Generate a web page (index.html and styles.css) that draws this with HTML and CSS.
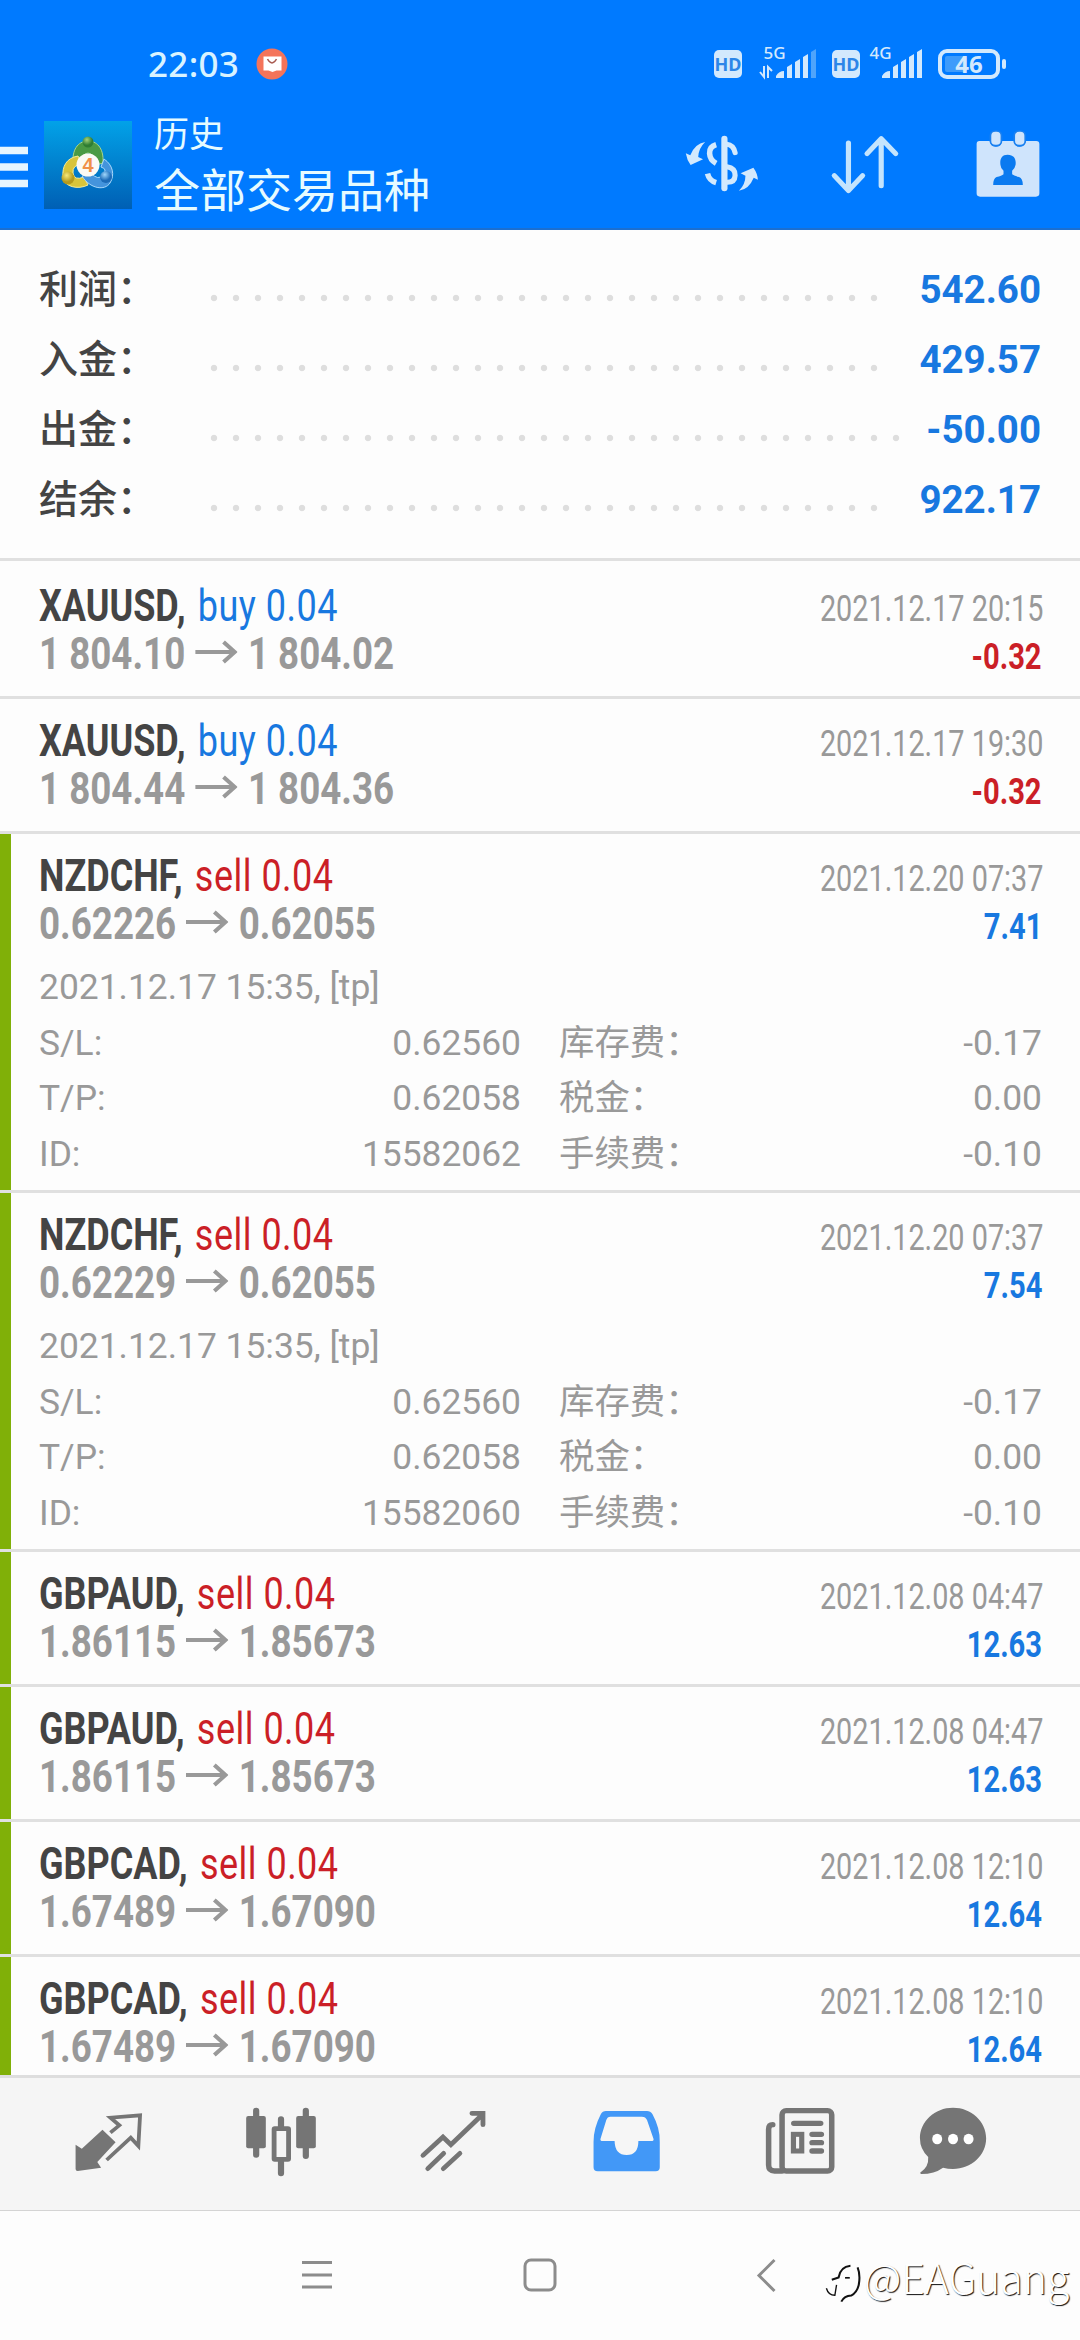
FILE: index.html
```html
<!DOCTYPE html>
<html lang="zh-CN">
<head>
<meta charset="utf-8">
<title>历史</title>
<link rel="stylesheet" href="styles.css">
</head>
<body>
<header class="top">
  <div class="status">
    <span class="clock">22:03</span>
    <svg class="mail" viewBox="0 0 32 32"><circle cx="16" cy="16" r="15.5" fill="#f4745a"/><path d="M7.500 8.500h18v14h-5l-4 1.500-4-1.500h-5z" fill="#fff"/><path d="M11.500 11q4.500 8 9 0" fill="none" stroke="#a85a50" stroke-width="1.500"/></svg>
    <svg class="signals" viewBox="712 44 296 40">
      <g fill="#d3e9fd">
        <rect x="714" y="50" width="28" height="28" rx="5"/>
        <rect x="832" y="50" width="28" height="28" rx="5"/>
        <path d="M776 78v-2q3-5 8-5v7zM787 78V67l5-3v14zM795 78V62l5-3v19zM803 78V57l5-3v24z"/>
        <path d="M882 78v-2q3-5 8-5v7zM893 78V67l5-3v14zM901 78V62l5-3v19zM909 78V57l5-3v24zM917 78V52l5-3v29z"/>
        <rect x="1002" y="59" width="4" height="10" rx="2"/>
      </g>
      <path d="M811 78V52l5-3v29z" fill="#4fa4fb"/>
      <path d="M764 66v11l-4-5M768 78V67l4 4" fill="none" stroke="#d3e9fd" stroke-width="2"/>
      <rect x="940" y="51" width="58" height="26" rx="7" fill="none" stroke="#d3e9fd" stroke-width="4"/>
      <rect x="945" y="56" width="22" height="16" rx="2" fill="#3d9bfb"/>
      <g class="status-text">
        <text x="728" y="71" class="hd">HD</text>
        <text x="846" y="71" class="hd">HD</text>
        <text x="774.500" y="59" class="net">5G</text>
        <text x="880.500" y="59" class="net">4G</text>
        <text x="969" y="73" class="charge">46</text>
      </g>
    </svg>
  </div>
  <div class="bar">
    <svg class="menu" viewBox="0 0 28 42"><path d="M0 4.500h28M0 21h28M0 37.500h28" stroke="#e6f5ff" stroke-width="7.500"/></svg>
    <svg class="logo" viewBox="0 0 88 88">
      <defs>
        <linearGradient id="sky" x1="0" y1="0" x2="0" y2="1"><stop offset="0" stop-color="#02a2e8"/><stop offset="1" stop-color="#005fb4"/></linearGradient>
        <radialGradient id="grn" cx=".4" cy=".3"><stop offset="0" stop-color="#a4d27a"/><stop offset="1" stop-color="#2f7d32"/></radialGradient>
        <radialGradient id="yel" cx=".4" cy=".3"><stop offset="0" stop-color="#f8ea7a"/><stop offset="1" stop-color="#b59a1c"/></radialGradient>
        <radialGradient id="blu" cx=".4" cy=".3"><stop offset="0" stop-color="#9fd6fb"/><stop offset="1" stop-color="#1d6cb8"/></radialGradient>
      </defs>
      <rect width="88" height="88" fill="url(#sky)"/>
      <path d="M29 42C28 26 36 20 44 20S60 26 59 42L52 44Q50 32 44 32T36 44z" fill="#4a9a44" stroke="#a7d58a"/>
      <path d="M34 35C22 37 18 46 19 56S34 69 44 64L40 56Q30 60 29 52T38 43z" fill="#d8c43a" stroke="#f6ec98"/>
      <path d="M60 38C69 44 71 54 66 62S46 68 38 55L47 52Q54 60 59 54T57 46z" fill="#4494dc" stroke="#a9d8fa"/>
      <circle cx="44" cy="21" r="5.500" fill="url(#grn)"/><circle cx="24" cy="57" r="6.500" fill="url(#yel)"/><circle cx="62" cy="56" r="6" fill="url(#blu)"/>
      <circle cx="44" cy="44" r="11.500" fill="#fbfaf5"/>
      <text x="44" y="51" class="logo-num">4</text>
    </svg>
    <div class="titles"><div class="subtitle">历史</div><div class="title">全部交易品种</div></div>
    <div class="actions">
      <svg class="action" viewBox="413 300 232 204" preserveAspectRatio="none">
        <g fill="none" stroke="#d3e9fd" stroke-width="15" stroke-linecap="round">
          <path d="M536 326V475" stroke-width="18"/><path d="M512 344Q492 350 493 370T512 400M487 431Q492 452 512 458" stroke-linecap="butt" stroke-width="16"/><path d="M543 343Q562 345 567 368M543 410Q568 414 567 436T543 457"/>
        </g>
        <g fill="#d3e9fd"><path d="M480 336Q450 341 437 376L424 370Q427 390 438 405L474 388 460 381Q461 355 480 336z"/><path d="M578 482Q607 478 621 443L633 449Q632 430 620 413L583 430 597 437Q597 463 578 482z"/></g>
      </svg>
      <svg class="action" viewBox="828 300 232 204" preserveAspectRatio="none"><path d="M896 339V480M855 437L896 482 937 437M991 467V326M950 371L991 326 1033 371" fill="none" stroke="#c4e4fd" stroke-width="15" stroke-linecap="round" stroke-linejoin="round"/></svg>
      <svg class="action" viewBox="1243 300 232 204" preserveAspectRatio="none">
        <path d="M1276 333H1306Q1309 350 1324 350T1342 333H1376Q1379 350 1393 350T1411 333H1441Q1450 333 1450 342V490Q1450 500 1440 500H1278Q1268 500 1268 490V342Q1268 333 1276 333z" fill="#cfe4fc"/>
        <rect x="1308" y="303" width="32" height="44" rx="14" fill="#cfe4fc" stroke="#1a80f0" stroke-width="5"/><rect x="1377" y="303" width="32" height="44" rx="14" fill="#cfe4fc" stroke="#1a80f0" stroke-width="5"/>
        <path d="M1358 374C1340 374 1335 388 1337 404Q1338 416 1346 422V433Q1341 438 1326 441 1316 445 1316 465H1402Q1402 445 1391 441 1376 438 1371 433V422Q1379 416 1381 404C1383 388 1377 374 1358 374z" fill="#0a7af0"/>
      </svg>
    </div>
  </div>
</header>

<section class="summary">
  <div class="sum"><span class="sum-label">利润：</span><span class="dots"></span><span class="sum-value">542.60</span></div>
  <div class="sum"><span class="sum-label">入金：</span><span class="dots"></span><span class="sum-value">429.57</span></div>
  <div class="sum"><span class="sum-label">出金：</span><span class="dots dots-long"></span><span class="sum-value">-50.00</span></div>
  <div class="sum"><span class="sum-label">结余：</span><span class="dots"></span><span class="sum-value">922.17</span></div>
</section>

<svg width="0" height="0" class="defs"><symbol id="arrow" viewBox="0 0 42 24" preserveAspectRatio="none"><path d="M0 12H39M28 2L39 12 28 22" fill="none" stroke="#999" stroke-width="4"/></symbol></svg>

<main class="deals">
  <article class="deal first">
    <div class="line"><div class="name">XAUUSD, <span class="buy">buy 0.04</span></div><div class="date">2021.12.17 20:15</div></div>
    <div class="line"><div class="price">1 804.10<svg class="arrow"><use href="#arrow"/></svg>1 804.02</div><div class="profit loss">-0.32</div></div>
  </article>
  <article class="deal">
    <div class="line"><div class="name">XAUUSD, <span class="buy">buy 0.04</span></div><div class="date">2021.12.17 19:30</div></div>
    <div class="line"><div class="price">1 804.44<svg class="arrow"><use href="#arrow"/></svg>1 804.36</div><div class="profit loss">-0.32</div></div>
  </article>
  <article class="deal closed open">
    <div class="line"><div class="name">NZDCHF, <span class="sell">sell 0.04</span></div><div class="date">2021.12.20 07:37</div></div>
    <div class="line"><div class="price">0.62226<svg class="arrow"><use href="#arrow"/></svg>0.62055</div><div class="profit">7.41</div></div>
    <div class="details">
      <div class="comment">2021.12.17 15:35, [tp]</div>
      <div>S/L:</div><div class="num">0.62560</div><div class="fee">库存费：</div><div class="num">-0.17</div>
      <div>T/P:</div><div class="num">0.62058</div><div class="fee">税金：</div><div class="num">0.00</div>
      <div>ID:</div><div class="num">15582062</div><div class="fee">手续费：</div><div class="num">-0.10</div>
    </div>
  </article>
  <article class="deal closed open">
    <div class="line"><div class="name">NZDCHF, <span class="sell">sell 0.04</span></div><div class="date">2021.12.20 07:37</div></div>
    <div class="line"><div class="price">0.62229<svg class="arrow"><use href="#arrow"/></svg>0.62055</div><div class="profit">7.54</div></div>
    <div class="details">
      <div class="comment">2021.12.17 15:35, [tp]</div>
      <div>S/L:</div><div class="num">0.62560</div><div class="fee">库存费：</div><div class="num">-0.17</div>
      <div>T/P:</div><div class="num">0.62058</div><div class="fee">税金：</div><div class="num">0.00</div>
      <div>ID:</div><div class="num">15582060</div><div class="fee">手续费：</div><div class="num">-0.10</div>
    </div>
  </article>
  <article class="deal closed">
    <div class="line"><div class="name">GBPAUD, <span class="sell">sell 0.04</span></div><div class="date">2021.12.08 04:47</div></div>
    <div class="line"><div class="price">1.86115<svg class="arrow"><use href="#arrow"/></svg>1.85673</div><div class="profit">12.63</div></div>
  </article>
  <article class="deal closed">
    <div class="line"><div class="name">GBPAUD, <span class="sell">sell 0.04</span></div><div class="date">2021.12.08 04:47</div></div>
    <div class="line"><div class="price">1.86115<svg class="arrow"><use href="#arrow"/></svg>1.85673</div><div class="profit">12.63</div></div>
  </article>
  <article class="deal closed">
    <div class="line"><div class="name">GBPCAD, <span class="sell">sell 0.04</span></div><div class="date">2021.12.08 12:10</div></div>
    <div class="line"><div class="price">1.67489<svg class="arrow"><use href="#arrow"/></svg>1.67090</div><div class="profit">12.64</div></div>
  </article>
  <article class="deal closed">
    <div class="line"><div class="name">GBPCAD, <span class="sell">sell 0.04</span></div><div class="date">2021.12.08 12:10</div></div>
    <div class="line"><div class="price">1.67489<svg class="arrow"><use href="#arrow"/></svg>1.67090</div><div class="profit">12.64</div></div>
  </article>
</main>

<nav class="tabs">
  <svg class="tab" viewBox="197 126 232 240" preserveAspectRatio="none"><path d="M297 209L335 247 282 306 293 323 225 333Q219 333 219 327V254L237 266z" fill="#757575"/><path d="M320 218L346 196 320 173 406 166 401 258 379 233 309 300" fill="none" stroke="#757575" stroke-width="11"/></svg>
  <svg class="tab" viewBox="700 126 232 240" preserveAspectRatio="none"><path d="M744 152V284M888 152V288M816 178V204M816 300V340" stroke="#757575" stroke-width="18" stroke-linecap="round"/><rect x="715" y="168" width="57" height="97" rx="6" fill="#757575"/><rect x="860" y="168" width="57" height="97" rx="6" fill="#757575"/><rect x="796" y="206" width="42" height="92" fill="#f5f5f5" stroke="#757575" stroke-width="14" rx="2"/></svg>
  <svg class="tab" viewBox="1205 126 232 240" preserveAspectRatio="none"><path d="M1231 286L1289 231 1312 254 1405 162M1373 160H1405V194M1245 326L1291 280M1290 326L1338 280" fill="none" stroke="#757575" stroke-width="14" stroke-linecap="round" stroke-linejoin="miter"/></svg>
  <svg class="tab" viewBox="139 126 232 240" preserveAspectRatio="none"><path d="M194 153H313Q323 153 329 163 351 205 350 245V322Q350 334 338 334H170Q158 334 158 322V245Q158 205 179 163 184 153 194 153z" fill="#4298f7"/><path d="M207 170H298Q309 170 313 180L332 237Q333 243 326 243H288Q288 285 254 285T219 243H184Q177 243 178 237L195 180Q198 170 207 170z" fill="#f6f6f6"/></svg>
  <svg class="tab" viewBox="642 126 232 240" preserveAspectRatio="none"><g fill="none" stroke="#757575" stroke-width="16" stroke-linecap="round"><rect x="706" y="152" width="144" height="181" rx="12"/><path d="M706 333H684Q667 333 667 315V208Q667 194 679 194M740 190H818M793 223H820M793 248H820M793 273H820"/><rect x="739" y="223" width="24" height="50" stroke-width="15"/></g></svg>
  <svg class="tab last" viewBox="1080 126 232 240" preserveAspectRatio="none"><path d="M1199 143C1252 143 1295 184 1295 235S1252 327 1199 327Q1184 327 1170 323 1145 342 1107 342 1101 340 1106 336 1129 320 1127 291 1103 268 1103 235C1103 184 1146 143 1199 143z" fill="#757575"/><g fill="#fff"><ellipse cx="1153" cy="237" rx="14.500" ry="15.500"/><ellipse cx="1199" cy="237" rx="14.500" ry="15.500"/><ellipse cx="1244" cy="237" rx="14.500" ry="15.500"/></g></svg>
</nav>

<footer class="system">
  <svg class="sys" viewBox="0 0 40 40"><path d="M5 7.500h30M5 20h30M5 32h30" stroke="#8c8c8c" stroke-width="3"/></svg>
  <svg class="sys" viewBox="0 0 40 40"><rect x="5" y="5" width="30" height="30" rx="6" fill="none" stroke="#8c8c8c" stroke-width="3"/></svg>
  <svg class="sys back" viewBox="0 0 40 40"><path d="M27.500 5L12 20.500 27.500 36" fill="none" stroke="#8c8c8c" stroke-width="3"/></svg>
</footer>
<div class="watermark">
  <svg class="mark" viewBox="825 600 112 140" preserveAspectRatio="none"><g fill="none" stroke="#111"><path d="M832 690Q838 711 857 711L862 680" stroke-width="4"/><path d="M848 665L868 658Q873 626 903 623" stroke-width="6"/><path d="M876 730Q885 713 905 712 927 700 929 668 931 645 924 628" stroke-width="6"/><path d="M887 659H901" stroke-width="5"/></g></svg>
  <span class="handle">@EAGuang</span>
</div>
</body>
</html>
```
FILE: styles.css
```css
* { box-sizing: border-box; }
body {
  margin: 0;
  width: 1080px;
  height: 2340px;
  overflow: hidden;
  position: relative;
  background: #fdfdfd;
  font-family: Roboto, "Noto Sans CJK SC", sans-serif;
  color: #444;
}
svg { display: block; flex: none; }
.defs { position: absolute; }

.top { height: 230px; background: #007aff; border-bottom: 2px solid #1c6fd0; }
.status { height: 104px; padding: 24px 72px 0 148px; display: flex; align-items: center; }
.clock { font: 500 35px/40px "Noto Sans", sans-serif; color: #d9f3ff; width: 108px; letter-spacing: .3px; }
.mail { width: 32px; height: 32px; }
.signals { width: 296px; height: 40px; margin-left: auto; overflow: visible; }
.status-text { font-family: "Noto Sans", sans-serif; text-anchor: middle; fill: #d3e9fd; }
.hd { font-weight: 700; font-size: 18px; fill: #2d86e8; }
.net { font-weight: 500; font-size: 17px; }
.charge { font-weight: 700; font-size: 24px; }

.bar { height: 124px; display: flex; align-items: flex-start; }
.menu { width: 28px; height: 42px; margin-top: 42px; }
.logo { width: 88px; height: 88px; margin: 17px 0 0 16px; }
.logo-num { font: 700 20px "Liberation Sans", sans-serif; text-anchor: middle; fill: #f09048; }
.titles { margin: 2px 0 0 22px; color: #e6fbff; font-family: "Noto Sans CJK SC", sans-serif; font-weight: 400; }
.subtitle { font-size: 35px; line-height: 52px; }
.title { font-size: 46px; line-height: 58px; }
.actions { margin: 26px 32px 0 auto; display: flex; gap: 63px; }
.action { width: 80px; height: 68px; }

.summary { height: 331px; padding: 25px 39px 0; border-bottom: 3px solid #e0e0e0; }
.sum { height: 70px; display: flex; align-items: center; line-height: 70px; }
.sum-label { width: 164px; font-size: 39px; font-weight: 500; white-space: nowrap; }
.dots { width: 682px; height: 22px; margin-top: 15px; background: radial-gradient(circle at 11px 11px, #dedede 2.800px, transparent 3.600px) 0 0 / 22px 22px repeat-x; }
.dots-long { width: 704px; }
.sum-value { margin-left: auto; font-size: 38.500px; font-weight: 700; color: #1878e0; }

.deals { height: 1514px; overflow: hidden; }
.deal { height: 135px; padding: 18px 38px 0 39px; border-bottom: 3px solid #e0e0e0; }
.first { height: 138px; padding-top: 21px; }
.closed { background: linear-gradient(#80b008, #80b008) 0 0 / 11px 100% no-repeat; }
.open { height: 359px; }
.line { height: 48px; line-height: 48px; display: flex; align-items: baseline; justify-content: space-between; white-space: nowrap; }
.name, .price { font-size: 44px; font-weight: 700; transform-origin: 0 0; transform: scaleX(.818); }
.name span { font-weight: 400; margin-left: 4px; letter-spacing: .6px; }
.buy { color: #1878e0; }
.sell { color: #cb1f27; }
.price { color: #999; transform: scaleX(.835); }
.arrow { display: inline-block; width: 51px; height: 24px; margin: 0 12px; vertical-align: 5px; }
.date, .profit { font-size: 36px; transform-origin: 100% 0; transform: scaleX(.8); color: #999; }
.date { margin-right: -1px; }
.profit { font-weight: 700; color: #1878e0; transform: scaleX(.81); }
.loss { color: #cb1f27; }
.details { margin-top: 12px; display: grid; grid-template-columns: 160px 322px 160px 1fr; grid-auto-rows: 55.500px; line-height: 55.500px; font-size: 35.400px; color: #999; white-space: nowrap; }
.fee { padding-left: 38px; }
.comment { grid-column: 1 / -1; }
.num { text-align: right; }

.tabs { height: 136px; padding: 24px 0 0 68px; display: flex; gap: 93px; background: #f5f5f5; border-top: 3px solid #dedede; border-bottom: 1px solid #d4d4d4; }
.tab { width: 80px; height: 80px; }
.last { margin-left: -21px; }
.system { height: 129px; padding: 44px 0 0 297px; display: flex; gap: 183px; }
.sys { width: 40px; height: 40px; }
.back { margin-left: 4px; }
.watermark { position: absolute; left: 824px; top: 2258px; display: flex; align-items: flex-start; }
.mark { width: 38px; height: 47px; }
.handle { margin: -8px 0 0 2px; font: 300 41px/52px "Noto Sans CJK SC", sans-serif; color: #fff; text-shadow: 1px 1px 1px #111; }
```
